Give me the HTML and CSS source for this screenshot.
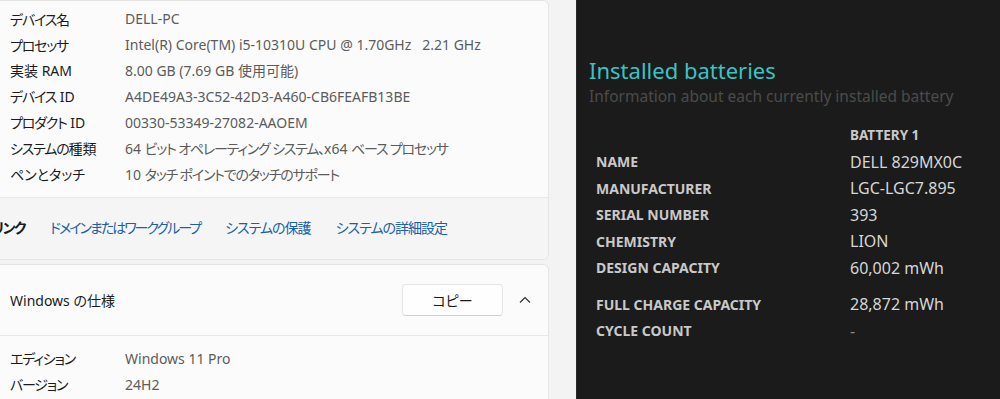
FILE: index.html
```html
<!DOCTYPE html>
<html lang="ja">
<head>
  <meta charset="UTF-8" />
  <meta name="viewport" content="width=device-width, initial-scale=1.0" />
  <title>バージョン情報 / Battery report</title>
  <link rel="stylesheet" href="styles.css">
</head>
<body>
  <!-- Windows settings: about page -->
  <div class="settings">
    <div class="card">
      <div class="spec-list">
        <div class="spec-row"><div class="spec-label"><span class="kana">デバイス</span>名</div><div class="spec-value">DELL-PC</div></div>
        <div class="spec-row"><div class="spec-label"><span class="kana">プロセッサ</span></div><div class="spec-value">Intel(R) Core(TM) i5-10310U CPU @ 1.70GHz&nbsp;&nbsp;&nbsp;2.21 GHz</div></div>
        <div class="spec-row"><div class="spec-label">実装 RAM</div><div class="spec-value">8.00 GB (7.69 GB 使用可能)</div></div>
        <div class="spec-row"><div class="spec-label"><span class="kana">デバイス</span> ID</div><div class="spec-value">A4DE49A3-3C52-42D3-A460-CB6FEAFB13BE</div></div>
        <div class="spec-row"><div class="spec-label"><span class="kana">プロダクト</span> ID</div><div class="spec-value">00330-53349-27082-AAOEM</div></div>
        <div class="spec-row"><div class="spec-label"><span class="kana">システムの</span>種類</div><div class="spec-value">64 <span class="kana">ビット オペレーティング システム、</span>x64 <span class="kana">ベース プロセッサ</span></div></div>
        <div class="spec-row"><div class="spec-label">ペンとタッチ</div><div class="spec-value">10 <span class="kana">タッチ ポイントでのタッチのサポート</span></div></div>
      </div>
      <div class="related">
        <span class="related-title">関連リンク</span>
        <a class="related-link link-narrow" href="#">ドメインまたはワークグループ</a>
        <a class="related-link" href="#">システムの保護</a>
        <a class="related-link" href="#">システムの詳細設定</a>
      </div>
    </div>

    <div class="card">
      <div class="card-header">
        <div class="card-title">Windows の仕様</div>
        <button class="copy-btn">コピー</button>
        <svg class="chevron" width="12" height="8" viewBox="0 0 12 8">
          <path d="M1 6.5 L6 1.5 L11 6.5" fill="none" stroke="#333" stroke-width="1.2" />
        </svg>
      </div>
      <div class="spec-list spec-list-win">
        <div class="spec-row"><div class="spec-label"><span class="kana">エディション</span></div><div class="spec-value">Windows 11 Pro</div></div>
        <div class="spec-row"><div class="spec-label"><span class="kana">バージョン</span></div><div class="spec-value">24H2</div></div>
      </div>
    </div>
  </div>

  <!-- battery report -->
  <div class="report">
    <h2 class="report-title">Installed batteries</h2>
    <div class="report-sub">Information about each currently installed battery</div>
    <div class="battery-table">
      <div class="bt-row bt-head"><div class="bt-label"></div><div class="bt-col">BATTERY 1</div></div>
      <div class="bt-row"><div class="bt-label">NAME</div><div class="bt-value">DELL 829MX0C</div></div>
      <div class="bt-row"><div class="bt-label">MANUFACTURER</div><div class="bt-value">LGC-LGC7.895</div></div>
      <div class="bt-row"><div class="bt-label">SERIAL NUMBER</div><div class="bt-value">393</div></div>
      <div class="bt-row"><div class="bt-label">CHEMISTRY</div><div class="bt-value">LION</div></div>
      <div class="bt-row"><div class="bt-label">DESIGN CAPACITY</div><div class="bt-value">60,002 mWh</div></div>
      <div class="bt-row bt-gap"><div class="bt-label">FULL CHARGE CAPACITY</div><div class="bt-value">28,872 mWh</div></div>
      <div class="bt-row"><div class="bt-label">CYCLE COUNT</div><div class="bt-value bt-dash">-</div></div>
    </div>
  </div>
</body>
</html>
```

FILE: styles.css
```css
html, body {
  margin: 0;
  padding: 0;
  height: 100vh;
  overflow: hidden;
}
body {
  display: flex;
  font-family: "Noto Sans", "Noto Sans CJK JP", sans-serif;
}

/* left: settings page */
.settings {
  width: 577px;
  background-color: #f3f3f3;
  border-right: 1px solid #2a2a2a;
  box-sizing: border-box;
  padding-right: 27px;
  display: flex;
  flex-direction: column;
  gap: 4px;
  font-feature-settings: "palt";
}
.card {
  flex-shrink: 0;
  background-color: #fbfbfb;
  border: 1px solid #e5e5e5;
  border-left: none;
  border-radius: 0 6px 6px 0;
  overflow: hidden;
}
.spec-list {
  padding: 5px 0 10px 10px;
}
.spec-row {
  display: flex;
  height: 25.8px;
  align-items: center;
  font-size: 14px;
}
.spec-label {
  width: 115px;
  color: #1b1b1b;
}
.spec-value {
  color: #5c5c5c;
}
.kana {
  letter-spacing: -1.2px;
}

.related {
  background-color: #f5f5f5;
  border-top: 1px solid #e8e8e8;
  height: 62px;
  padding-bottom: 2px;
  box-sizing: border-box;
  display: flex;
  align-items: center;
  gap: 25px;
  font-size: 14px;
}
.related-title {
  margin-left: -33px;
  margin-right: 0;
  font-weight: bold;
  color: #1b1b1b;
  letter-spacing: -1.5px;
}
.related-link {
  color: #1a5fa8;
  text-decoration: none;
  letter-spacing: -1px;
}
.link-narrow {
  letter-spacing: -2px;
}

.card-header {
  height: 71px;
  display: flex;
  align-items: center;
  padding: 0 17px 0 10px;
  border-bottom: 1px solid #e8e8e8;
  box-sizing: border-box;
}
.card-title {
  flex: 1;
  font-size: 14px;
  color: #1b1b1b;
}
.copy-btn {
  width: 101px;
  height: 32px;
  font-family: inherit;
  font-feature-settings: "palt";
  font-size: 14px;
  color: #1b1b1b;
  background-color: #fefefe;
  border: 1px solid #e5e5e5;
  border-bottom-color: #cfcfcf;
  border-radius: 4px;
  margin-right: 16px;
}
.chevron {
  display: block;
}
.spec-list-win {
  padding-top: 10px;
}

/* right: battery report */
.report {
  flex: 1;
  background-color: #1b1b1b;
  padding: 57px 0 0 12px;
  font-family: "Noto Sans", sans-serif;
}
.report-title {
  margin: 0;
  font-size: 22px;
  font-weight: normal;
  line-height: 26px;
  color: #38c4c6;
}
.report-sub {
  font-size: 15.5px;
  line-height: 26px;
  color: #4b4b4b;
}
.battery-table {
  margin: 13px 0 0 7px;
}
.bt-row {
  display: flex;
  align-items: center;
  height: 26.5px;
}
.bt-label {
  width: 254px;
  font-size: 14px;
  font-weight: bold;
  color: #c9c9c9;
}
.bt-col {
  font-size: 13.5px;
  font-weight: bold;
  color: #c9c9c9;
}
.bt-value {
  font-size: 16px;
  color: #d6d6d6;
}
.bt-gap {
  margin-top: 10px;
}
.bt-dash {
  color: #8a8a8a;
}
```
